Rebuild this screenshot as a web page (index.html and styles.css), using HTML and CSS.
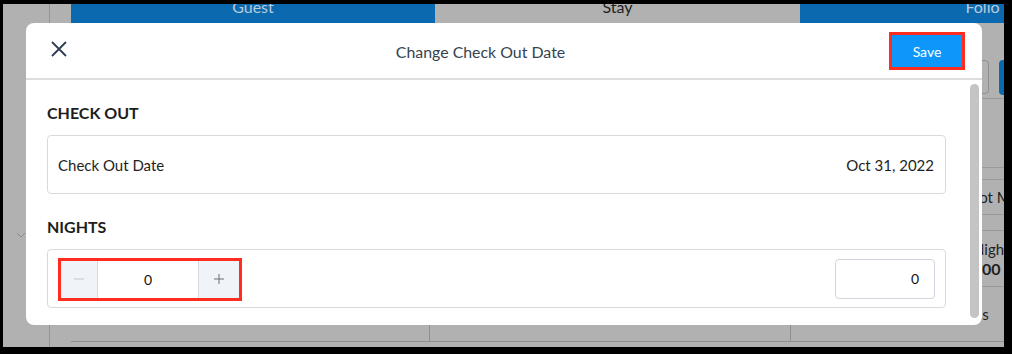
FILE: index.html
```html
<!DOCTYPE html>
<html lang="en">
<head>
<meta charset="utf-8">
<title>Change Check Out Date</title>
<link rel="stylesheet" href="styles.css">
</head>
<body>
<div class="frame">
  <aside class="sidebar">
    <svg class="chev" width="10" height="6" viewBox="0 0 10 6"><path d="M1 1 L5 5 L9 1" fill="none" stroke="#8a8a8a" stroke-width="1"/></svg>
  </aside>
  <main class="main">
    <div class="tabs">
      <div class="tab tab-blue"><span>Guest</span></div>
      <div class="tab tab-gray"><span>Stay</span></div>
      <div class="tab tab-blue"><span>Folio</span></div>
    </div>
    <div class="grid">
      <div class="col col1"></div>
      <div class="col col2"></div>
      <div class="col col3">
        <div class="r r-tool"><span class="outline-btn"></span><span class="blue-btn"></span></div>
        <div class="r r-a"></div>
        <div class="r r-b"></div>
        <div class="r r-c"><span class="t t1">Not Moved</span></div>
        <div class="r r-d"></div>
        <div class="r r-e"><span class="t t2">Nights</span><span class="t t3">0.00</span></div>
        <div class="r r-f"><span class="t t4">Extras</span></div>
      </div>
    </div>
  </main>

  <div class="modal">
    <header class="modal-head">
      <button class="close" aria-label="Close">
        <svg width="16" height="16" viewBox="0 0 16 16"><path d="M1 1 L15 15 M15 1 L1 15" stroke="#2d3e50" stroke-width="1.8" fill="none"/></svg>
      </button>
      <h1 class="title">Change Check Out Date</h1>
      <div class="save-wrap"><button class="save">Save</button></div>
    </header>
    <div class="modal-body">
      <div class="content">
        <h2 class="section">CHECK OUT</h2>
        <div class="card">
          <span>Check Out Date</span>
          <span>Oct 31, 2022</span>
        </div>
        <h2 class="section section-2">NIGHTS</h2>
        <div class="card">
          <div class="stepper">
            <button class="step step-minus" aria-label="Decrease">
              <svg width="12" height="12" viewBox="0 0 12 12"><path d="M1 6 H11" stroke="#c2c6cc" stroke-width="1"/></svg>
            </button>
            <div class="step-val">0</div>
            <button class="step step-plus" aria-label="Increase">
              <svg width="12" height="12" viewBox="0 0 12 12"><path d="M1 6 H11 M6 1 V11" stroke="#6b6f75" stroke-width="1"/></svg>
            </button>
          </div>
          <div class="num-input">0</div>
        </div>
      </div>
      <div class="scrollbar"><div class="thumb"></div></div>
    </div>
  </div>
</div>
</body>
</html>
```

FILE: styles.css
```css
* { box-sizing: border-box; }
html, body { margin: 0; padding: 0; }
body {
  background: #000;
  width: 1012px;
  height: 354px;
  overflow: hidden;
  font-family: Lato, "Open Sans", "Liberation Sans", sans-serif;
}
.frame {
  position: relative;
  margin: 4px 0 0 3px;
  width: 1001px;
  height: 343px;
  background: #b1b1b1;
  display: flex;
  overflow: hidden;
}
.sidebar {
  width: 47px;
  flex: none;
  border-right: 1px solid #959595;
  padding: 228px 0 0 13px;
}
.chev { display: block; }
.main {
  flex: 1;
  display: flex;
  flex-direction: column;
  padding: 0 0 5px 21px;
  min-width: 0;
}
.tabs {
  height: 19px;
  display: flex;
  flex: none;
}
.tab {
  flex: none;
  width: 365px;
  text-align: center;
  font-size: 16px;
  line-height: 16px;
  overflow: hidden;
}
.tab:first-child { width: 364px; }
.tab span { display: block; margin-top: -5px; }
.tab-blue { background: #0b69af; color: #b9cbdc; }
.tab-gray { background: #b1b1b1; color: #222; }
.grid {
  flex: 1;
  display: flex;
  border-bottom: 1px solid #8f8f8f;
}
.col { flex: none; }
.col1 { width: 358px; }
.col2 { width: 361px; border-left: 1px solid #8f8f8f; }
.col3 {
  flex: 1;
  border-left: 1px solid #8f8f8f;
  display: flex;
  flex-direction: column;
  min-width: 0;
}
.r {
  flex: none;
  border-bottom: 1px solid #9a9a9a;
  display: flex;
  flex-direction: column;
  justify-content: center;
  white-space: nowrap;
  color: #1f1f1f;
  font-size: 15px;
  line-height: 19px;
}
.r-tool {
  height: 76px;
  flex-direction: row;
  justify-content: flex-start;
  align-items: flex-start;
  padding: 37px 0 0 158px;
  gap: 10px;
}
.outline-btn {
  width: 40px; height: 34px;
  border: 1px solid #8f8f8f;
  border-radius: 4px;
  flex: none;
}
.blue-btn {
  width: 60px; height: 35px;
  background: #0b69af;
  border-radius: 4px;
  flex: none;
}
.r-a { height: 69px; }
.r-b { height: 12px; }
.r-c { height: 35px; }
.r-d { height: 16px; }
.r-e { height: 56px; }
.r-f { flex: 1; border-bottom: 0; }
.t1 { margin-left: 177px; }
.t2 { margin-left: 182px; }
.t3 { margin-left: 178px; font-weight: 700; font-size: 16px; }
.t4 { margin-left: 157px; }

/* Modal */
.modal {
  position: absolute;
  left: 23px;
  top: 19px;
  width: 956px;
  height: 302px;
  background: #fff;
  border-radius: 8px;
  display: flex;
  flex-direction: column;
  overflow: hidden;
}
.modal-head {
  height: 57px;
  flex: none;
  border-bottom: 2px solid #dedede;
  display: flex;
  align-items: center;
  padding: 0 17px 0 24px;
}
.close {
  width: 22px;
  height: 22px;
  padding: 0;
  border: 0;
  background: none;
  display: flex;
  align-items: center;
  justify-content: flex-start;
}
.close svg { display: block; margin-left: 1px; margin-top: -3px; }
.title {
  flex: 1;
  margin: 0;
  text-align: center;
  font-weight: 400;
  font-size: 15.9px;
  color: #36434f;
  padding-top: 2px;
}
.save-wrap {
  border: 3px solid #ff2c1f;
  width: 76px;
  height: 38px;
  margin-top: 1px;
}
.save {
  width: 100%;
  height: 100%;
  border: 0;
  background: #0e97fa;
  color: #fff;
  font-family: inherit;
  font-size: 14px;
  padding: 0;
}
.modal-body {
  flex: 1;
  display: flex;
  min-height: 0;
}
.content {
  flex: 1;
  padding: 23px 24px 0 21px;
}
.section {
  margin: 0;
  font-size: 16px;
  line-height: 20px;
  font-weight: 700;
  color: #1d1d1d;
}
.section-2 { margin-top: 23px; }
.card {
  margin-top: 12px;
  height: 59px;
  border: 1px solid #dadada;
  border-radius: 4px;
  padding: 0 11px 0 10px;
  display: flex;
  align-items: center;
  justify-content: space-between;
  font-size: 15px;
  color: #1e1e1e;
}
.stepper {
  display: flex;
  border: 3px solid #ff2c1f;
  width: 184px;
  height: 43px;
  margin-top: 1px;
}
.step {
  border: 0;
  padding: 0;
  background: #f0f3f7;
  display: flex;
  align-items: center;
  justify-content: center;
}
.step-minus { width: 37px; border-right: 1px solid #d6dbe1; }
.step-plus { width: 41px; border-left: 1px solid #d6dbe1; }
.step-val {
  flex: 1;
  display: flex;
  align-items: center;
  justify-content: center;
  font-size: 14px;
  color: #111;
  background: #fff;
}
.num-input {
  width: 100px;
  height: 40px;
  border: 1px solid #cfd6de;
  border-radius: 4px;
  display: flex;
  align-items: center;
  justify-content: flex-end;
  padding-right: 15px;
  font-size: 14px;
  color: #111;
  margin-right: -1px;
}
.scrollbar {
  width: 9px;
  flex: none;
  margin: 4px 3px 7px 0;
}
.thumb {
  height: 100%;
  background: #c4c4c4;
  border-radius: 5px;
}
```
